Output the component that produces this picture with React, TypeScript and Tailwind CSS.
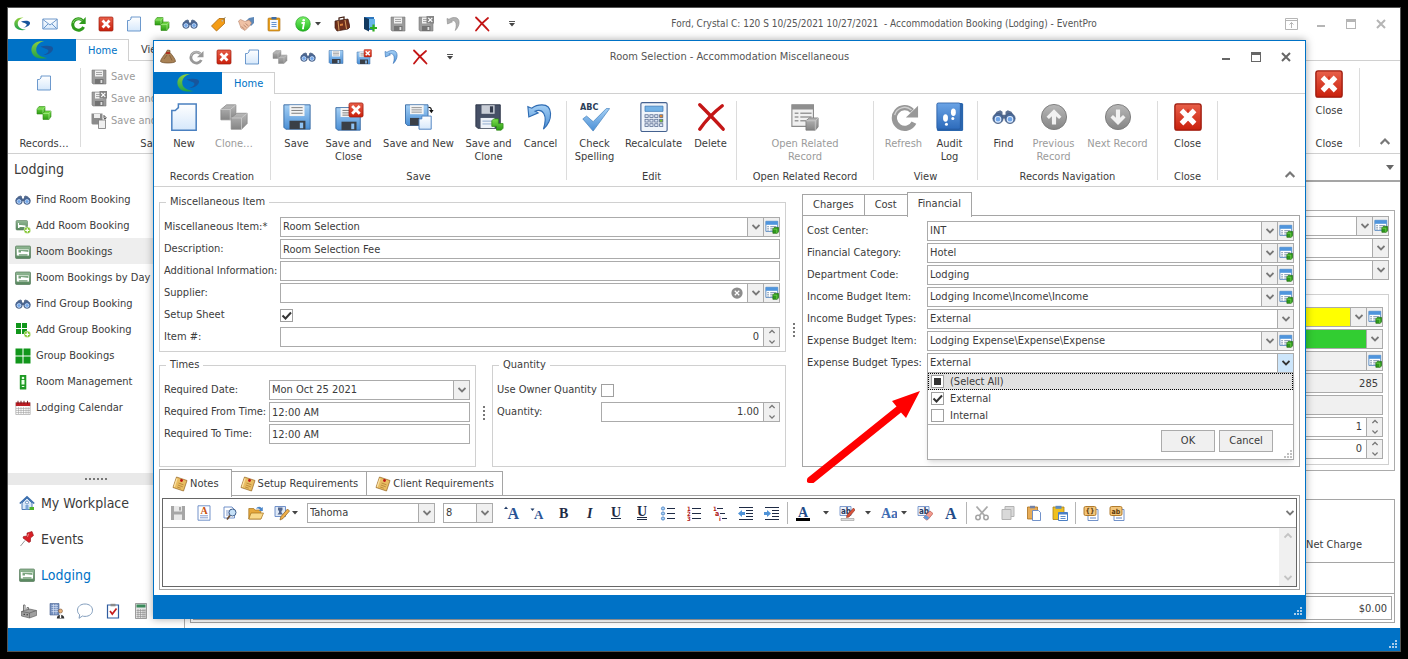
import { ReactNode, useId, useState } from "react";
import clsx from "clsx";

type IconProps = { name: string; size?: string };

const GREEN_CUBES = (
  <>
    <path d="M1 4l2-2.500h6v5l-2 2.500H1z" fill="url(#gGreen)" stroke="#2f8a16" strokeWidth=".6" />
    <path d="M1 4h6l2-2.500M7 4v6" fill="none" stroke="#b5f39a" strokeWidth=".6" />
    <path d="M7 8.500L9 6h6v5.500L13 14.500H7z" fill="url(#gGreen)" stroke="#2f8a16" strokeWidth=".6" />
    <path d="M7 8.500h6L15 6M13 8.500v6" fill="none" stroke="#b5f39a" strokeWidth=".6" />
  </>
);

const GREY_CUBES = (
  <>
    <path d="M1 4l3-2.500h5v5.500l-3 2.500H1z" fill="url(#gGrey)" stroke="#858585" strokeWidth=".4" />
    <path d="M1 4h5l3-2.500M6 4v6" fill="none" stroke="#cfcfcf" strokeWidth=".4" />
    <path d="M6.500 8.500l3-2.500h5.500v5.500l-3 3H6.500z" fill="url(#gGrey)" stroke="#858585" strokeWidth=".4" />
    <path d="M6.500 8.500h5.500l3-2.500M12 8.500v6" fill="none" stroke="#cfcfcf" strokeWidth=".4" />
  </>
);

const BINOCULARS = (
  <>
    <path d="M3 4.500L5.500 3.500l1.500 1v2h2v-2l1.500-1L13 4.500l2.500 4.500h-15z" fill="#5b7092" />
    <circle cx="4" cy="9" r="3.400" fill="#4a6a9a" stroke="#42587c" strokeWidth=".5" />
    <circle cx="12" cy="9" r="3.400" fill="#4a6a9a" stroke="#42587c" strokeWidth=".5" />
    <circle cx="4" cy="9.500" r="1.900" fill="#6fa5e8" stroke="#dcebff" strokeWidth=".7" />
    <circle cx="12" cy="9.500" r="1.900" fill="#6fa5e8" stroke="#dcebff" strokeWidth=".7" />
  </>
);

const PAGE = <path d="M5 1h9.500v14h-13V4.500h1.800L5 3z" fill="url(#gPage)" stroke="#4a80c0" strokeWidth=".8" />;

const BLUE_FLOPPY = (
  <>
    <path d="M1 1.500h14v13H2l-1-1z" fill="url(#gBlue)" stroke="#3d6ea5" strokeWidth=".5" />
    <path d="M4 1.700h8v5.800H4z" fill="#f4f4f4" />
    <path d="M5 3h6M5 4.500h6M5 6h6" stroke="#777" strokeWidth=".5" />
    <path d="M4 10h8.500v4.500H4z" fill="#3a3f47" />
    <path d="M9.500 11h1.800v3H9.500z" fill="#8fc1f2" />
  </>
);

const GREY_FLOPPY = (
  <>
    <path d="M1 1h14v14H2l-1-1z" fill="#9b9b9b" stroke="#7e7e7e" strokeWidth=".6" />
    <path d="M4 1.500h8v6H4z" fill="#efefef" />
    <path d="M5 3.500h6M5 5.500h6" stroke="#8a8a8a" strokeWidth=".7" />
    <path d="M4 10h8.500v5H4z" fill="#737373" />
    <path d="M9.500 11h1.800v3H9.500z" fill="#dedede" />
  </>
);

const RED_CLOSE = (
  <>
    <rect x="1" y="1" width="14" height="14" rx="1.200" fill="url(#gRed)" stroke="#9e1a0c" strokeWidth=".7" />
    <path d="M5.500 5.500l5 5M10.500 5.500l-5 5" stroke="#fff" strokeWidth="2.800" strokeLinecap="square" />
    <path d="M8 4v1.500M8 10.500V12" stroke="#d63520" strokeWidth="1" />
  </>
);

const BED = (
  <>
    <rect x=".5" y="2" width="15" height="12.500" rx="1" fill="url(#gBed)" stroke="#557a5a" strokeWidth=".7" />
    <path d="M3 5.500h10.500v5.500H3z" fill="none" stroke="#e6f2e6" strokeWidth=".7" />
    <path d="M1.800 5v6.500h2V10h8.700v1.500h1.500V8L6 7v1.500H3.300V5z" fill="#fff" />
  </>
);

const PLUS_BADGE = (
  <>
    <circle cx="12.300" cy="12.300" r="3.300" fill="#79c221" stroke="#fff" strokeWidth=".5" />
    <path d="M12.300 10.200v4.200M10.200 12.300h4.200" stroke="#fff" strokeWidth="1.200" />
  </>
);

const CLIPBOARD = (
  <>
    <rect x="2" y="2" width="12" height="13" rx="1" fill="#e6a022" stroke="#a86a0c" strokeWidth=".6" />
    <path d="M4 4h8v9.500H4z" fill="#f3f8ff" />
    <path d="M5.500 1h5v2.500h-5z" fill="#3f6ea8" />
    <path d="M5.500 6.500h5M5.500 8.500h5M5.500 10.500h5" stroke="#3f78c4" strokeWidth=".8" />
  </>
);

const ICONS: Record<string, ReactNode> = {
  logo: (
    <>
      <path d="M9.500 1.500C4 1 0 4 .3 8.300.6 12.800 5.500 15.300 12 13.800 7.500 13.300 4 11.500 3.800 8 3.700 4.800 6 2.500 9.500 1.500z" fill="url(#gLogo)" />
      <path d="M7 5.500c3-.8 8.500-1.300 9 1.200.4 2.300-3 4.800-7 5 2.200-.9 4-2.200 3.600-3.400C12.200 7.200 9.500 7.200 7 5.500z" fill="#17559c" />
    </>
  ),
  mail: (
    <>
      <path d="M.800 3h14.400v10H.800z" fill="url(#gPage)" stroke="#5d8cc4" strokeWidth=".9" />
      <path d="M1 3.500l7 5.500 7-5.500M1.500 12.500L6 8M14.500 12.500L10 8" fill="none" stroke="#5d8cc4" strokeWidth=".9" />
    </>
  ),
  refreshGreen: (
    <>
      <path d="M12.500 4.500A5.700 5.700 0 1 0 13.600 11" fill="none" stroke="#2f9a1c" strokeWidth="3" />
      <path d="M15.700 1v7H9z" fill="#2f9a1c" />
      <path d="M12 4.300A5.500 5.500 0 0 0 3 7" fill="none" stroke="#9be07f" strokeWidth=".9" />
    </>
  ),
  refreshGrey: (
    <>
      <path d="M12.300 4.700A5.500 5.500 0 1 0 13.300 11" fill="none" stroke="#989898" strokeWidth="2.800" />
      <path d="M15.500 2v6.300H9z" fill="#989898" />
      <path d="M12 4.300A5.500 5.500 0 0 0 3 7" fill="none" stroke="#cfcfcf" strokeWidth=".8" />
    </>
  ),
  close: RED_CLOSE,
  page: PAGE,
  cubesGreen: GREEN_CUBES,
  cubesGrey: GREY_CUBES,
  binoculars: BINOCULARS,
  tag: (
    <>
      <path d="M9 2.500h5.500v5L6.500 15 1.500 10z" fill="#f59d16" stroke="#a8650a" strokeWidth=".8" />
      <circle cx="12.300" cy="4.700" r="1" fill="#fff" stroke="#a8650a" strokeWidth=".5" />
      <path d="M12.500 4.500L15.500 1" stroke="#775" strokeWidth=".7" />
    </>
  ),
  handshake: (
    <>
      <path d="M8 5l3-3 5-1v6l-3 3z" fill="#5d88b8" />
      <path d="M.5 5l2-1.500 4.500 2 4-1.500 2.500 3-2 3L7 14.500 3 12z" fill="#efc2a6" stroke="#b5836a" strokeWidth=".6" />
      <path d="M3.500 10.500l3 2.500M5.500 9l3 2.500M7.500 7.500l3 2.500" stroke="#a8745a" strokeWidth=".7" />
    </>
  ),
  clipboard: CLIPBOARD,
  info: (
    <>
      <circle cx="8" cy="8" r="7.300" fill="url(#gInfo)" stroke="#18981a" strokeWidth=".6" />
      <circle cx="8.700" cy="4.200" r="1.300" fill="#fff" />
      <path d="M6.500 7H9l-1 5.300h1" fill="none" stroke="#fff" strokeWidth="1.800" />
    </>
  ),
  suitcase: (
    <>
      <path d="M5 4V2l5-1v3" fill="none" stroke="#3d1a0e" strokeWidth="1.200" />
      <path d="M1 5l13-2 2 8-2 2-11 2-2-3z" fill="#6e2f1b" stroke="#3d1a0e" strokeWidth=".7" />
      <path d="M4 5l1 9.500M11 4l1.500 9" stroke="#d8a063" strokeWidth="1" />
      <path d="M6 8l3-.5v2L6 10z" fill="#d8813f" />
    </>
  ),
  doorAdd: (
    <>
      <path d="M2 1h10v13H6z" fill="#2d76bd" />
      <path d="M2 1l5 2v12.500L2 13z" fill="#12395f" />
      <path d="M7 3h6v9H7z" fill="#69b4ea" />
      <path d="M11.500 8.500v7M8 12h7" stroke="#2fae22" strokeWidth="2.200" />
    </>
  ),
  floppyGrey: GREY_FLOPPY,
  floppyGreyClose: (
    <>
      {GREY_FLOPPY}
      <path d="M8.500 0H16v7.500H8.500z" fill="#858585" />
      <path d="M10.300 1.800l4 4M14.300 1.800l-4 4" stroke="#fff" strokeWidth="1.200" />
    </>
  ),
  floppyGreyNew: (
    <>
      <path d="M.500.5h11v11H1.500l-1-1z" fill="#8b8b8b" />
      <path d="M3 1h6v4H3z" fill="#eee" />
      <path d="M7.500 7h7v8.500h-7z" fill="#f0f0f0" stroke="#777" strokeWidth=".8" />
      <path d="M12 3h2v3M12.500 4.500L14 6.300l1.500-1.800" fill="none" stroke="#444" strokeWidth=".9" />
    </>
  ),
  floppy: BLUE_FLOPPY,
  floppyClose: (
    <>
      <path d="M1 3h13v12H2l-1-1z" fill="url(#gBlue)" stroke="#3d6ea5" strokeWidth=".5" />
      <path d="M3.500 3.200h8v4.800h-8z" fill="#f4f4f4" />
      <path d="M4.500 4.500h6M4.500 5.800h6M4.500 7h6" stroke="#777" strokeWidth=".5" />
      <path d="M4 10.500h8V15H4z" fill="#3a3f47" />
      <path d="M9.200 11.500h1.600v3H9.200z" fill="#8fc1f2" />
      <rect x="8" y=".5" width="7.500" height="7.500" rx=".8" fill="url(#gRed)" stroke="#9e1a0c" strokeWidth=".4" />
      <path d="M10.200 2.700l3 3M13.200 2.700l-3 3" stroke="#fff" strokeWidth="1.500" strokeLinecap="square" />
    </>
  ),
  floppyNew: (
    <>
      <path d="M.800 1.500h12v11H1.800l-1-1z" fill="url(#gBlue)" stroke="#3d6ea5" strokeWidth=".5" />
      <path d="M3.200 1.700h7.300v4.800H3.200z" fill="#f4f4f4" />
      <path d="M4 3h5.500M4 4.200h5.500M4 5.400h5.500" stroke="#777" strokeWidth=".4" />
      <path d="M3.200 8.500h5v4h-5z" fill="#3a3f47" />
      <path d="M9.500 7.500h5v7h-6.500V9h1.500z" fill="url(#gPage)" stroke="#4a80c0" strokeWidth=".5" />
      <path d="M13 2.800c1.200 0 1.600.5 1.600 1.500" fill="none" stroke="#111" strokeWidth=".6" />
      <path d="M13.400 4.200h2.400l-1.200 1.800z" fill="#111" />
    </>
  ),
  floppyClone: (
    <>
      <path d="M1 1.500h13v12.500H2l-1-1z" fill="#465066" stroke="#2b3346" strokeWidth=".5" />
      <path d="M4 1.700h7v4.600H4z" fill="#c8cdd6" />
      <path d="M8.500 2.300h1.700v3.300H8.500z" fill="#333b4d" />
      <path d="M3.500 8.500h7.500v5.400H3.500z" fill="#eef2f8" />
      <path d="M4.500 10.200h5.500M4.500 11.700h5.500" stroke="#8ba7cc" strokeWidth=".5" />
      <path d="M9.500 10l1-1h2.500v2.500h2.500v2.500l-1 1H12v-2H9.500z" fill="url(#gGreen)" stroke="#2f8a16" strokeWidth=".4" />
    </>
  ),
  undo: (
    <path d="M1 2.500l.5 5.500 5-2.200-1.700-.9c4-1.500 7 1.600 4.500 9.600C14.500 9.500 14.500 1.500 8.500 1.500c-2 0-3.800.5-5.500 1.800z" fill="url(#gBlue)" stroke="#2f6cb3" strokeWidth=".6" />
  ),
  undoGrey: (
    <path d="M1 2.500l.5 5.500 5-2.200-1.700-.9c4-1.500 7 1.600 4.500 9.600C14.500 9.500 14.500 1.500 8.500 1.500c-2 0-3.800.5-5.500 1.800z" fill="#b1b1b1" stroke="#8c8c8c" strokeWidth=".6" />
  ),
  cross: (
    <>
      <path d="M2 1.500C5 4.500 10 9.500 14.500 14.500" stroke="#c41616" strokeWidth="1.800" strokeLinecap="round" />
      <path d="M14 2C9.500 5.500 5.500 9.500 2 14.500" stroke="#c41616" strokeWidth="1.800" strokeLinecap="round" />
    </>
  ),
  moneyBag: (
    <>
      <path d="M6 3.500L7.500 1l2.500.5L10 3.500C12 6 15.500 10 15.500 12.500c-2 2-13 2-15 0C.5 10.500 4 6 6 3.500z" fill="#a98255" stroke="#6c4c2a" strokeWidth=".7" />
      <path d="M6 4h4" stroke="#b02a1a" strokeWidth="1.800" />
      <path d="M4 10l3-4M12 11.500L9.500 6" stroke="#7a5833" strokeWidth=".7" />
    </>
  ),
  spelling: (
    <>
      <text x="0" y="4.500" fontSize="4.800" fontWeight="bold" fill="#2c3e58">ABC</text>
      <path d="M1.500 9l2-1.500L7 10.500 14 3.500h1.800L7 15.500z" fill="url(#gBlue)" stroke="#4b86bf" strokeWidth=".4" />
    </>
  ),
  calculator: (
    <>
      <rect x="1" y=".3" width="14" height="15.400" rx=".8" fill="#f0f5fb" stroke="#44618f" strokeWidth=".6" />
      <path d="M3.200 2.200h9.600v2.800H3.200z" fill="#74b2e6" stroke="#3f79b5" strokeWidth=".4" />
      {[6.8, 9.2, 11.6].map((y) =>
        [3.2, 5.8, 8.4, 11].map((x) => (
          <rect
            key={`${x}-${y}`}
            x={x}
            y={y}
            width="1.700"
            height="1.500"
            fill={x === 11 && y === 6.8 ? "#e88a2a" : x === 11 && y === 9.2 ? "#7cc230" : "#dfe8f5"}
            stroke="#52658c"
            strokeWidth=".4"
          />
        ))
      )}
    </>
  ),
  record: (
    <>
      <path d="M1 1.500h11.500v11.500H1z" fill="#f0f0f0" stroke="#8b8b8b" strokeWidth=".6" />
      <path d="M1 1.500h11.500v2.500H1z" fill="#8f8f8f" />
      <path d="M2.500 6h2M5.500 6h6M2.500 8h2M5.500 8h6M2.500 10h2M5.500 10h3" stroke="#999" strokeWidth=".7" />
      <path d="M8.500 10l1.800-1.500H15v4.800L13.500 15h-5z" fill="url(#gGrey)" stroke="#777" strokeWidth=".4" />
      <path d="M8.500 10h5L15 8.500M13.500 10v5" fill="none" stroke="#cfcfcf" strokeWidth=".4" />
    </>
  ),
  audit: (
    <>
      <rect x="1" y=".5" width="14" height="15" rx=".8" fill="#2a66ae" />
      <rect x="1" y=".5" width="12.500" height="14" rx=".8" fill="url(#gAudit)" stroke="#2659a0" strokeWidth=".4" />
      <ellipse cx="9.800" cy="5.500" rx="1.300" ry="2" fill="#fff" />
      <ellipse cx="9.500" cy="8.800" rx=".8" ry=".8" fill="#fff" />
      <ellipse cx="5.600" cy="8.500" rx="1.300" ry="2" fill="#fff" />
      <ellipse cx="6.100" cy="11.800" rx=".8" ry=".8" fill="#fff" />
    </>
  ),
  up: (
    <>
      <circle cx="8" cy="8" r="6.700" fill="url(#gGrey)" stroke="#7c7c7c" strokeWidth=".5" />
      <path d="M8 3.800l4 4-1.300 1.300-1.600-1.500V12H6.900V7.600L5.300 9.100 4 7.800z" fill="#f1f1f1" />
    </>
  ),
  down: (
    <>
      <circle cx="8" cy="8" r="6.700" fill="url(#gGrey)" stroke="#7c7c7c" strokeWidth=".5" />
      <path d="M8 12.200l4-4-1.300-1.300-1.600 1.500V4H6.900v4.400L5.300 6.900 4 8.200z" fill="#f1f1f1" />
    </>
  ),
  bed: BED,
  bedAdd: (
    <>
      <rect x="1" y="2.500" width="11.500" height="9.500" rx="1" fill="url(#gBed)" stroke="#5c8060" strokeWidth=".6" />
      <path d="M3 5v5h1.500V9h5v1h1V7.500L6 7H4V5z" fill="#fff" />
      {PLUS_BADGE}
    </>
  ),
  group: <path d="M.500.500h7v7h-7zM8.500.500h7v7h-7zM.500 8.500h7v7h-7zM8.500 8.500h7v7h-7z" fill="#11961b" />,
  groupAdd: (
    <>
      <path d="M1 1h5v5H1zM7 1h5v5H7zM1 7h5v5H1zM7 7h5v5H7z" fill="#11961b" />
      {PLUS_BADGE}
    </>
  ),
  room: (
    <>
      <rect x="4.800" y="1" width="6.500" height="14.500" rx=".5" fill="#1e9a24" />
      <circle cx="8" cy="4" r="1.300" fill="#e8ffe6" />
      <path d="M6.500 6h3v4.500h-3z" fill="#e8ffe6" />
      <path d="M6.800 12.500h2.500" stroke="#e8ffe6" />
    </>
  ),
  calendar: (
    <>
      <path d="M.800 2.500h14.400v12H.800z" fill="#fafafa" stroke="#999" strokeWidth=".6" />
      <path d="M.800 2.500h14.400v3.500H.800z" fill="#bb1d24" />
      <path d="M3 .8v3M6 .8v3M9 .8v3M12.500.8v3" stroke="#6d0d12" strokeWidth=".9" />
      <path d="M3.500 7v7M6 7v7M8.500 7v7M11 7v7M13.200 7v7M1 8.500h14M1 10.500h14M1 12.500h14" stroke="#999" strokeWidth=".5" />
    </>
  ),
  house: (
    <>
      <path d="M3 8v6.500h10V8L8 3z" fill="#d9e8f8" stroke="#3c6fae" strokeWidth=".9" />
      <path d="M.800 8.500L8 1.800l7.200 6.700" fill="none" stroke="#3c6fae" strokeWidth="1.700" />
      <circle cx="8" cy="7.500" r="1.500" fill="#fff" stroke="#3c6fae" strokeWidth=".7" />
      <path d="M6.500 10h3v4.500h-3z" fill="#7aa6d8" />
      <path d="M10.500 12h4.500v3h-4.500z" fill="#4db22a" />
    </>
  ),
  pin: (
    <>
      <path d="M6 9.500L1.500 15" stroke="#999" strokeWidth="1" />
      <path d="M8 2l5-1.500 1.500 4-3 2.500v3.500l-1.500 1-6-4.500.5-1.500 3.500-.5z" fill="#d81f26" stroke="#8d1015" strokeWidth=".6" />
      <path d="M9.500 2.800l-1 3" stroke="#f7a0a0" strokeWidth=".9" />
    </>
  ),
  factory: (
    <>
      <path d="M2.500 9V2H4v5M6 7V4.500h1.500V7" stroke="#777" strokeWidth="1" fill="none" />
      <path d="M.5 8.500l8-2.500 7 1.500v5l-7 2.500-8-2z" fill="#a0a0a0" stroke="#555" strokeWidth=".6" />
      <path d="M.5 8.500l8 1.500 7-2.500M8.500 10v5" stroke="#555" strokeWidth=".6" fill="none" />
      <path d="M2.500 11.300h1.500M5.500 11.800h1.500" stroke="#333" strokeWidth="1" />
    </>
  ),
  building: (
    <>
      <path d="M1 .5h9V12H1z" fill="#7792c0" stroke="#46608f" strokeWidth=".6" />
      <path d="M2.500 2.500h6.500M2.500 4.500h6.500M2.500 6.500h6.500M2.500 8.500h6.500M4.500 1v10.500M7 1v10.500" stroke="#dbe6f7" strokeWidth=".6" />
      <circle cx="11.500" cy="8" r="2" fill="#e7b27d" stroke="#6a4525" strokeWidth=".5" />
      <path d="M7.800 15.500c0-5 7.500-5 7.500 0z" fill="#333" />
      <path d="M11.500 11.500V15" stroke="#fff" strokeWidth="1.400" />
    </>
  ),
  bubble: (
    <path d="M8 1c4.300 0 7.500 2.500 7.500 6.200s-3.200 6.200-7.500 6.200c-1 0-1.800-.1-2.600-.4L2 15.300l.7-3.500C1.200 10.600.5 9 .5 7.200.5 3.500 3.700 1 8 1z" fill="#fff" stroke="#7593b5" strokeWidth=".9" />
  ),
  checklist: (
    <>
      <path d="M2.500 2h11v13h-11z" fill="#fff" stroke="#2f5c9f" strokeWidth="1.200" />
      <path d="M5.500.8h5v2.500h-5z" fill="#8b8b8b" />
      <path d="M5 8l2.300 3L11.500 5.500" fill="none" stroke="#c51d1d" strokeWidth="1.700" />
    </>
  ),
  calcSmall: (
    <>
      <path d="M2.500.5h11v15h-11z" fill="#e3e3e3" stroke="#777" strokeWidth=".7" />
      <path d="M3.500 1.500h9v3h-9z" fill="#3a8a5b" />
      <path d="M5 6v9M7.500 6v9M10 6v9M12 6v9M3.500 7.500h9M3.500 9.500h9M3.500 11.500h9M3.500 13.500h9" stroke="#8c8c8c" strokeWidth=".6" />
    </>
  ),
  note: (
    <>
      <path d="M4.500 1l10.500 3.500-3.500 10.500L1 11.500z" fill="#e9bd62" stroke="#94621c" strokeWidth=".7" />
      <path d="M5 2.500L2.200 11" stroke="#fbe3a8" strokeWidth="1.200" />
      <path d="M6.500 7l5 1.800M5.800 9l5 1.800M5.200 11l3.500 1.200" stroke="#a8762c" strokeWidth=".7" />
      <circle cx="9.500" cy="4.500" r="1.400" fill="#bf1515" />
    </>
  ),
  lookup: (
    <>
      <path d="M1 1.500h13.500v11.500H1z" fill="#fff" stroke="#4a80bd" strokeWidth="1" />
      <path d="M1 1.500h13.500v4H1z" fill="#4f95dd" />
      <path d="M2.500 7.500h2M6 7.500h7M2.500 9.500h2M6 9.500h3M2.500 11.500h2M6 11.500h3" stroke="#7f93ad" strokeWidth="1" />
      <path d="M9 10l1.500-1.500h5v5L14 15.200H9z" fill="#2f9a1c" stroke="#1f6d10" strokeWidth=".8" />
      <path d="M9.500 10.500h4V15" fill="none" stroke="#7fdc5c" strokeWidth=".8" />
    </>
  ),
  clear: (
    <>
      <circle cx="8" cy="8" r="7.500" fill="#8c8c8c" />
      <path d="M5 5l6 6M11 5l-6 6" stroke="#fff" strokeWidth="1.600" />
    </>
  ),
  saveFlat: (
    <>
      <path d="M1 1h14v14H1z" fill="#a6a6a6" />
      <path d="M4 1h8v5.500H4zM4 9.500h8V15H4z" fill="#e9e9e9" />
      <path d="M9 2h2v3.500H9z" fill="#a6a6a6" />
    </>
  ),
  docA: (
    <>
      <path d="M2 .8h12v14.400H2z" fill="#fff" stroke="#6387c4" strokeWidth=".9" />
      <path d="M4 10.800h8M4 12.800h8" stroke="#7793c8" strokeWidth=".9" />
      <text x="4.500" y="9" fontSize="10" fontWeight="bold" fontFamily="Liberation Serif" fill="#c8500f">A</text>
    </>
  ),
  preview: (
    <>
      <path d="M2 2h8l2.500 2.500V13H2z" fill="#fff" stroke="#6387c4" strokeWidth=".9" />
      <path d="M4 6h3M4 8h3M4 10h3" stroke="#7793c8" strokeWidth=".9" />
      <circle cx="10.500" cy="7.500" r="3.500" fill="#c5e0f7" stroke="#3f5f8c" strokeWidth="1" />
      <path d="M8 10.500L5 14.500" stroke="#6c4a2d" strokeWidth="1.700" />
    </>
  ),
  open: (
    <>
      <path d="M.8 3.500h5l1 1.500h6v9H.8z" fill="#e6a83c" stroke="#a5711a" strokeWidth=".7" />
      <path d="M3 8h12.500l-2.500 6H.8z" fill="#f9d98a" stroke="#a5711a" strokeWidth=".7" />
      <path d="M8 4c1-2.500 4-3 5.500-1l1.300-1v4h-4l1.300-1.300C11 3.500 9.500 3.300 8 4z" fill="#4b86c9" />
    </>
  ),
  saveEdit: (
    <>
      <path d="M1 1.500h10.500v10H1z" fill="#dfe9f6" stroke="#6387c4" strokeWidth=".9" />
      <path d="M4 2.500h4.500v2.500L7.500 6v1.500L9 9.500H3.500L5 7.500V6L4 5z" fill="#52658c" />
      <path d="M13.500 4l2 2-6.500 7.500-3 1.500.8-3.200z" fill="#f0b04c" stroke="#8e5f18" strokeWidth=".7" />
    </>
  ),
  growA: (
    <>
      <text x="3.500" y="14" fontSize="16" fontWeight="bold" fontFamily="Liberation Serif" fill="#2b5494">A</text>
      <path d="M0 4L2 1.500 4 4z" fill="#1f3a66" />
    </>
  ),
  shrinkA: (
    <>
      <text x="4" y="14" fontSize="13" fontWeight="bold" fontFamily="Liberation Serif" fill="#2b5494">A</text>
      <path d="M.5 3.500L2.500 6l2-2.500z" fill="#1f3a66" />
    </>
  ),
  bold: <text x="3" y="13" fontSize="14" fontWeight="bold" fontFamily="Liberation Serif" fill="#1e2b45">B</text>,
  italic: <text x="5" y="13" fontSize="14" fontWeight="bold" fontStyle="italic" fontFamily="Liberation Serif" fill="#1e2b45">I</text>,
  underline: (
    <>
      <text x="3" y="11.500" fontSize="14" fontFamily="Liberation Serif" fontWeight="bold" fill="#1e2b45">U</text>
      <path d="M3 13.500h10" stroke="#1e2b45" />
    </>
  ),
  underline2: (
    <>
      <text x="3" y="10.500" fontSize="14" fontFamily="Liberation Serif" fontWeight="bold" fill="#1e2b45">U</text>
      <path d="M3 12.500h10M3 14.500h10" stroke="#1e2b45" />
    </>
  ),
  bullets: (
    <>
      <path d="M7 3.500h8M7 8.500h8M7 13.500h8" stroke="#1e2b45" />
      {[3.5, 8.5, 13.5].map((y) => (
        <circle key={y} cx="3" cy={y} r="1.600" fill="#a9d0f5" stroke="#3c78bd" strokeWidth=".8" />
      ))}
    </>
  ),
  numbers: (
    <>
      <path d="M6 3.500h9M6 8.500h9M6 13.500h9" stroke="#1e2b45" />
      {[1, 2, 3].map((n) => (
        <text key={n} x="1" y={n * 5 + 0.5} fontSize="6" fontWeight="bold" fill="#b01818">{n}</text>
      ))}
    </>
  ),
  multilevel: (
    <>
      <path d="M5 3.500h6M8 8.500h5M10 13.500h5" stroke="#1e2b45" />
      <text x="1" y="5.500" fontSize="6" fontWeight="bold" fill="#b01818">1</text>
      <text x="3" y="10.500" fontSize="7" fontWeight="bold" fill="#b01818">a</text>
      <text x="7" y="15.500" fontSize="6" fontWeight="bold" fill="#b01818">i</text>
    </>
  ),
  outdent: (
    <>
      <path d="M1 2.500h14M8 5.500h7M8 8.500h7M8 11.500h7M1 14.500h14" stroke="#1e2b45" />
      <path d="M0 8.500L4 5v2h3v3H4v2z" fill="#4f93d8" />
    </>
  ),
  indent: (
    <>
      <path d="M1 2.500h14M8 5.500h7M8 8.500h7M8 11.500h7M1 14.500h14" stroke="#1e2b45" />
      <path d="M7 8.500L3 5v2H0v3h3v2z" fill="#4f93d8" />
    </>
  ),
  fontColor: (
    <>
      <text x="3" y="11.500" fontSize="14" fontWeight="bold" fontFamily="Liberation Serif" fill="#234b88">A</text>
      <path d="M1 13h14v3H1z" fill="#000" />
    </>
  ),
  highlight: (
    <>
      <path d="M1 1.500h11v9H1z" fill="#eef3fb" stroke="#6387c4" strokeWidth=".8" />
      <text x="2" y="8.500" fontSize="8" fontWeight="bold" fill="#26395f">ab</text>
      <path d="M14.500 3l1.500 2-6 7-2.500.5.500-2.500z" fill="#d9533a" stroke="#8c2a18" strokeWidth=".6" />
      <path d="M2 13.500h13v2H2z" fill="#ddd" stroke="#999" strokeWidth=".6" />
    </>
  ),
  caseAa: <text x="0" y="13" fontSize="14" fontWeight="bold" fontFamily="Liberation Serif" fill="#3e6db5">Aa</text>,
  eraser: (
    <>
      <path d="M1 1.500h11v9H1z" fill="#eef3fb" stroke="#6387c4" strokeWidth=".8" />
      <text x="2" y="8.500" fontSize="8" fontWeight="bold" fill="#26395f">ab</text>
      <path d="M13 6l3 2.500-5 6-1.500.500-3-2.500z" fill="#f19a8e" stroke="#b2483a" strokeWidth=".6" />
      <path d="M9 10l3.200 2.700-2.200 2.300-3.500-2.500z" fill="#5e9add" />
    </>
  ),
  plainA: <text x="2" y="14" fontSize="16" fontWeight="bold" fontFamily="Liberation Serif" fill="#234b88">A</text>,
  cut: (
    <>
      <path d="M2.500 1.500l8 9M13.500 1.500l-8 9" stroke="#aaa" strokeWidth="1.800" />
      <circle cx="4" cy="12.500" r="2.200" fill="none" stroke="#a3a3a3" strokeWidth="1.500" />
      <circle cx="12" cy="12.500" r="2.200" fill="none" stroke="#a3a3a3" strokeWidth="1.500" />
    </>
  ),
  copy: (
    <>
      <path d="M5 1.500h9v10H5z" fill="#d9d9d9" stroke="#b3b3b3" />
      <path d="M2 4.500h9v10H2z" fill="#d9d9d9" stroke="#b3b3b3" />
    </>
  ),
  paste: (
    <>
      <path d="M1.500 2h10v12h-10z" fill="#e7ac57" stroke="#a9701d" strokeWidth=".8" />
      <path d="M4 .8h5v2.500H4z" fill="#7382a5" />
      <path d="M6.500 5.500h6l2 2v8h-8z" fill="#fff" stroke="#6387c4" strokeWidth=".9" />
    </>
  ),
  pasteSpecial: (
    <>
      <path d="M1 2h11v12.500H1z" fill="#efc01f" stroke="#a9801d" strokeWidth=".8" />
      <path d="M3.500.8h6v3h-6z" fill="#5d8bc0" />
      <path d="M6.500 7.500h9v8h-9z" fill="#fff" stroke="#4b7fc4" strokeWidth="1" />
      <path d="M6.500 8.500h9" stroke="#4b7fc4" strokeWidth="2" />
      <path d="M8.500 11.500h5M8.500 13.500h5" stroke="#4b7fc4" strokeWidth=".9" />
    </>
  ),
  fieldCodes: (
    <>
      <path d="M5 4.500h10v11H5z" fill="#fff" stroke="#6387c4" strokeWidth=".9" />
      <path d="M7 13h6" stroke="#6387c4" />
      <rect x="1" y="1.500" width="12" height="9" rx="1.500" fill="#f2c57a" stroke="#a9701d" strokeWidth=".9" />
      <text x="2.500" y="8.200" fontSize="7" fontWeight="bold" fill="#5b3a0c">{"{}"}</text>
    </>
  ),
  fieldResult: (
    <>
      <path d="M5 4.500h10v11H5z" fill="#fff" stroke="#6387c4" strokeWidth=".9" />
      <path d="M7 13h6" stroke="#6387c4" />
      <rect x="1" y="1.500" width="12" height="9" rx="1.500" fill="#f2c57a" stroke="#a9701d" strokeWidth=".9" />
      <text x="2.500" y="8.500" fontSize="7" fontWeight="bold" fill="#5b3a0c">ab</text>
    </>
  ),
};

function Icon({ name, size = "size-4" }: IconProps) {
  return (
    <svg viewBox="0 0 16 16" className={clsx("shrink-0", size)} aria-hidden="true">
      {ICONS[name]}
    </svg>
  );
}

function Gradients() {
  const stops: [string, string, string][] = [
    ["gGreen", "#7be04c", "#2b9a14"],
    ["gGrey", "#b8b8b8", "#858585"],
    ["gPage", "#ffffff", "#d6e8fb"],
    ["gBlue", "#a5d0f5", "#4a8fd6"],
    ["gRed", "#e8604a", "#c9200c"],
    ["gBed", "#93b996", "#55855c"],
    ["gInfo", "#7cf06a", "#20b81e"],
    ["gLogo", "#8fd03c", "#1fa04a"],
    ["gAudit", "#6ba4e6", "#2d6bbb"],
  ];
  return (
    <svg className="absolute size-0" aria-hidden="true">
      <defs>
        {stops.map(([id, from, to]) => (
          <linearGradient key={id} id={id} x1="0" y1="0" x2="0" y2="1">
            <stop offset="0" stopColor={from} />
            <stop offset="1" stopColor={to} />
          </linearGradient>
        ))}
      </defs>
    </svg>
  );
}

function Chevron({ up = false, className = "size-2 text-[#777]" }: { up?: boolean; className?: string }) {
  return (
    <svg viewBox="0 0 8 8" className={clsx("shrink-0", className)} aria-hidden="true">
      <path d={up ? "M0.500 5.500L4 2l3.500 3.500" : "M0.500 2L4 5.500 7.500 2"} fill="none" stroke="currentColor" strokeWidth="1.800" />
    </svg>
  );
}

function Triangle() {
  return (
    <svg viewBox="0 0 6 4" className="h-1 w-1.5 shrink-0 text-[#444]" aria-hidden="true">
      <path d="M0 0h6L3 3.500z" fill="currentColor" />
    </svg>
  );
}

function Grip({ className }: { className?: string }) {
  return (
    <svg viewBox="0 0 9 9" className={clsx("size-[9px]", className)} aria-hidden="true">
      <path d="M6 0h2v2H6zM3 3h2v2H3zM6 3h2v2H6zM0 6h2v2H0zM3 6h2v2H3zM6 6h2v2H6z" fill="currentColor" />
    </svg>
  );
}

function QuickBar({ icons }: { icons: string[] }) {
  return (
    <div className="flex items-center">
      {icons.map((icon) => (
        <button
          key={icon}
          type="button"
          aria-label={icon}
          className={clsx("flex h-7 items-center justify-center", icon === "info" ? "w-10 gap-1" : "w-7")}
        >
          <Icon name={icon} />
          {icon === "info" && <Triangle />}
        </button>
      ))}
      <button type="button" aria-label="Customize toolbar" className="flex h-7 w-8 flex-col items-center justify-center gap-px">
        <span className="h-px w-1.5 bg-[#555]" />
        <Triangle />
      </button>
    </div>
  );
}

function WindowControls({ pinned = false, className }: { pinned?: boolean; className: string }) {
  return (
    <div className={clsx("flex pr-1", className)}>
      {pinned && (
        <button type="button" aria-label="Ribbon options" className="flex size-[30px] items-center justify-center">
          <svg viewBox="0 0 13 12" className="h-3 w-[13px]" fill="none" stroke="currentColor">
            <path d="M.5.5h12v11H.5zM.5 2.500h12M6.500 10V4.500M4.500 6.500l2-2 2 2" />
          </svg>
        </button>
      )}
      <button type="button" aria-label="Minimize" className="flex size-[30px] items-center justify-center">
        <span className="mt-1 h-0.5 w-2 bg-current" />
      </button>
      <button type="button" aria-label="Maximize" className="flex size-[30px] items-center justify-center">
        <span className="size-2.5 border border-t-3 border-current" />
      </button>
      <button type="button" aria-label="Close" className="flex size-[30px] items-center justify-center">
        <svg viewBox="0 0 10 10" className="size-2.5" stroke="currentColor" strokeWidth="2">
          <path d="M1 1l8 8M9 1L1 9" />
        </svg>
      </button>
    </div>
  );
}

function RibbonTabs({ tabs }: { tabs: string[] }) {
  return (
    <div className="flex h-[22px] shrink-0">
      <button type="button" aria-label="File" className="flex w-[68px] items-center justify-center bg-[#0072c6]">
        <Icon name="logo" size="size-[22px]" />
      </button>
      {tabs.map((tab, i) => (
        <button
          key={tab}
          type="button"
          className={clsx(
            "border-[#d0d0d0] px-3",
            i === 0 ? "w-[53px] border-t border-r text-[#0072c6]" : "border-b"
          )}
        >
          {tab}
        </button>
      ))}
      <div className="flex-1 border-b border-[#d0d0d0]" />
    </div>
  );
}

type RibbonItem = { icon: string; label: string; width: string; disabled?: boolean };
type Group = { title: string; width: string; items: RibbonItem[] };

const DIALOG_GROUPS: Group[] = [
  {
    title: "Records Creation",
    width: "w-[117px]",
    items: [
      { icon: "page", label: "New", width: "w-11" },
      { icon: "cubesGrey", label: "Clone…", width: "w-14", disabled: true },
    ],
  },
  {
    title: "Save",
    width: "w-[296px]",
    items: [
      { icon: "floppy", label: "Save", width: "w-11" },
      { icon: "floppyClose", label: "Save and Close", width: "w-[60px]" },
      { icon: "floppyNew", label: "Save and New", width: "w-20" },
      { icon: "floppyClone", label: "Save and Clone", width: "w-[60px]" },
      { icon: "undo", label: "Cancel", width: "w-11" },
    ],
  },
  {
    title: "Edit",
    width: "w-[170px]",
    items: [
      { icon: "spelling", label: "Check Spelling", width: "w-12" },
      { icon: "calculator", label: "Recalculate", width: "w-[70px]" },
      { icon: "cross", label: "Delete", width: "w-11" },
    ],
  },
  {
    title: "Open Related Record",
    width: "w-[137px]",
    items: [{ icon: "record", label: "Open Related Record", width: "w-20", disabled: true }],
  },
  {
    title: "View",
    width: "w-[104px]",
    items: [
      { icon: "refreshGrey", label: "Refresh", width: "w-12", disabled: true },
      { icon: "audit", label: "Audit Log", width: "w-11" },
    ],
  },
  {
    title: "Records Navigation",
    width: "w-[180px]",
    items: [
      { icon: "binoculars", label: "Find", width: "w-11" },
      { icon: "up", label: "Previous Record", width: "w-14", disabled: true },
      { icon: "down", label: "Next Record", width: "w-[72px]", disabled: true },
    ],
  },
  { title: "Close", width: "w-[60px]", items: [{ icon: "close", label: "Close", width: "w-12" }] },
];

const SMALL_RIBBON_ICONS = ["binoculars"];

function RibbonButton({ item }: { item: RibbonItem }) {
  return (
    <button
      type="button"
      disabled={item.disabled}
      className={clsx("flex flex-col items-center gap-1 leading-[13px]", item.width, item.disabled && "text-[#9b9b9b]")}
    >
      <span className="flex size-8 items-center justify-center">
        <Icon name={item.icon} size={SMALL_RIBBON_ICONS.includes(item.icon) ? "size-6" : "size-[30px]"} />
      </span>
      <span>{item.label}</span>
    </button>
  );
}

function RibbonGroup({ title, width, children }: { title: string; width: string; children: ReactNode }) {
  return (
    <div className={clsx("flex shrink-0 flex-col border-r border-[#dcdcdc]", width)}>
      <div className="flex min-h-0 flex-1 justify-center">{children}</div>
      <p className="-mb-1 text-center whitespace-nowrap">{title}</p>
    </div>
  );
}

function CollapseRibbon({ className }: { className: string }) {
  return (
    <button type="button" aria-label="Collapse ribbon" className={clsx("mr-2.5 self-end", className)}>
      <Chevron up className="size-2.5 text-[#777]" />
    </button>
  );
}

function ComboButton({ active = false }: { active?: boolean }) {
  return (
    <span
      className={clsx(
        "pointer-events-none flex w-4 shrink-0 items-center justify-center border-l border-[#ababab]",
        active ? "bg-[#cde6fb]" : "bg-[#f0f0f0]"
      )}
    >
      <Chevron className={active ? "size-2 text-[#333]" : "size-2 text-[#777]"} />
    </span>
  );
}

type ComboProps = { id?: string; label?: string; value: string; lookup?: boolean; clearable?: boolean; fill?: string };

function Combo({ id, label, value, lookup = false, clearable = false, fill = "bg-white" }: ComboProps) {
  return (
    <div className="flex h-5 w-full border border-[#ababab]">
      <select id={id} aria-label={label} className={clsx("min-w-0 flex-1 appearance-none px-0.5 outline-none", fill)}>
        <option>{value}</option>
      </select>
      {clearable && (
        <button type="button" aria-label="Clear" className="flex w-5 items-center justify-center bg-white">
          <Icon name="clear" size="size-3" />
        </button>
      )}
      <ComboButton />
      {lookup && <LookupButton />}
    </div>
  );
}

function LookupButton() {
  return (
    <button type="button" aria-label="Open record" className="flex w-4 shrink-0 items-center justify-center border-l border-[#ababab] bg-[#f0f0f0]">
      <Icon name="lookup" size="size-3.5" />
    </button>
  );
}

function TextField({ id, value = "" }: { id: string; value?: string }) {
  return <input id={id} defaultValue={value} className="h-5 w-full border border-[#ababab] bg-white px-0.5 outline-none" />;
}

function SpinField({ id, label, value }: { id?: string; label?: string; value: string }) {
  return (
    <div className="flex h-5 w-full border border-[#ababab]">
      <input id={id} aria-label={label} defaultValue={value} className="min-w-0 flex-1 px-1 text-right outline-none" />
      <span className="flex w-4 shrink-0 flex-col items-center justify-center gap-1 border-l border-[#ababab] bg-[#f0f0f0]">
        <Chevron up className="size-1.5 text-[#777]" />
        <Chevron className="size-1.5 text-[#777]" />
      </span>
    </div>
  );
}

type CheckState = "on" | "off" | "mixed";

function CheckBox({ id, label, initial }: { id?: string; label?: string; initial: CheckState }) {
  const [state, setState] = useState<CheckState>(initial);
  return (
    <span className="relative flex size-[13px] shrink-0">
      <input
        id={id}
        aria-label={label}
        type="checkbox"
        checked={state === "on"}
        ref={(el) => {
          if (el) el.indeterminate = state === "mixed";
        }}
        onChange={(e) => setState(e.target.checked ? "on" : "off")}
        className="size-[13px] appearance-none border border-[#a0a0a0] bg-white"
      />
      <svg viewBox="0 0 13 13" className="pointer-events-none absolute inset-0 size-[13px]" aria-hidden="true">
        {state === "on" && <path d="M2.500 6.500l3 3 5.500-6" fill="none" stroke="#333" strokeWidth="2" />}
        {state === "mixed" && <path d="M3 3h7v7H3z" fill="#333" />}
      </svg>
    </span>
  );
}

function Row({ label, children }: { label: string; children: (id: string) => ReactNode }) {
  const id = useId();
  return (
    <>
      <label htmlFor={id} className="whitespace-nowrap">
        {label}
      </label>
      <div className="flex h-5 min-w-0 items-center">{children(id)}</div>
    </>
  );
}

function FieldGroup({ title, columns, children }: { title: string; columns: string; children: ReactNode }) {
  return (
    <fieldset className="min-w-0 border border-[#d0d0d0] pr-[5px] pl-1">
      <legend className="ml-0.5 px-1 leading-[14px]">{title}</legend>
      <div className={clsx("grid items-center gap-y-0.5 pt-2 pb-1", columns)}>{children}</div>
    </fieldset>
  );
}

function SplitterDots() {
  return (
    <div className="flex flex-col items-center justify-center gap-0.5">
      {[0, 1, 2, 3].map((i) => (
        <span key={i} className="size-0.5 bg-[#777]" />
      ))}
    </div>
  );
}

const FINANCIAL_FIELDS = [
  { label: "Cost Center:", value: "INT", lookup: true },
  { label: "Financial Category:", value: "Hotel", lookup: true },
  { label: "Department Code:", value: "Lodging", lookup: true },
  { label: "Income Budget Item:", value: "Lodging Income\\Income\\Income", lookup: true },
  { label: "Income Budget Types:", value: "External", lookup: false },
  { label: "Expense Budget Item:", value: "Lodging Expense\\Expense\\Expense", lookup: true },
];

const BUDGET_TYPES: { label: string; state: CheckState }[] = [
  { label: "(Select All)", state: "mixed" },
  { label: "External", state: "on" },
  { label: "Internal", state: "off" },
];

function BudgetTypesField({ id }: { id: string }) {
  const [open, setOpen] = useState(true);
  return (
    <div className="relative w-full">
      <button
        id={id}
        type="button"
        aria-expanded={open}
        onClick={() => setOpen(!open)}
        className="flex h-5 w-full items-center border border-[#ababab] bg-white text-left"
      >
        <span className="flex-1 px-0.5">External</span>
        <span className="flex h-full">
          <ComboButton active={open} />
        </span>
      </button>
      {open && (
        <div className="absolute inset-x-0 top-5 z-10 border border-t-0 border-[#ababab] bg-white shadow-md">
          {BUDGET_TYPES.map((type, i) => (
            <label
              key={type.label}
              className={clsx(
                "flex h-[17px] items-center gap-1.5 border border-dotted px-0.5",
                i === 0 ? "border-black bg-[#e1e1e1]" : "border-transparent"
              )}
            >
              <CheckBox initial={type.state} />
              {type.label}
            </label>
          ))}
          <div className="relative flex justify-end gap-1 border-t border-[#ababab] pt-[5px] pr-5 pb-[7px]">
            <button type="button" onClick={() => setOpen(false)} className="h-[22px] w-[54px] border border-[#ababab] bg-[#f0f0f0]">
              OK
            </button>
            <button type="button" onClick={() => setOpen(false)} className="h-[22px] w-[54px] border border-[#ababab] bg-[#f0f0f0]">
              Cancel
            </button>
            <Grip className="absolute right-0 bottom-0 text-[#c0c0c0]" />
          </div>
        </div>
      )}
    </div>
  );
}

function FinancialPanel() {
  return (
    <div className="flex min-w-0 flex-col">
      <div className="flex h-6 items-end">
        {["Charges", "Cost", "Financial"].map((tab) => (
          <button
            key={tab}
            type="button"
            className={clsx(
              "border border-[#a5a5a5] px-2.5",
              tab === "Financial" ? "relative -mb-px -ml-px h-[25px] border-b-0 bg-white pb-0.5" : "h-[22px] not-first:-ml-px"
            )}
          >
            {tab}
          </button>
        ))}
      </div>
      <div className="-mt-px flex-1 border border-[#a5a5a5] pt-[5px] pr-[5px] pl-1">
        <div className="grid grid-cols-[120px_minmax(0,1fr)] items-center gap-y-0.5">
          {FINANCIAL_FIELDS.map((field) => (
            <Row key={field.label} label={field.label}>
              {(id) => <Combo id={id} value={field.value} lookup={field.lookup} />}
            </Row>
          ))}
          <Row label="Expense Budget Types:">{(id) => <BudgetTypesField id={id} />}</Row>
        </div>
      </div>
    </div>
  );
}

function ItemPanel() {
  return (
    <div className="flex min-w-0 flex-col gap-1.5 pt-[3px]">
      <FieldGroup title="Miscellaneous Item" columns="grid-cols-[116px_minmax(0,1fr)]">
        <Row label="Miscellaneous Item:*">{(id) => <Combo id={id} value="Room Selection" lookup />}</Row>
        <Row label="Description:">{(id) => <TextField id={id} value="Room Selection Fee" />}</Row>
        <Row label="Additional Information:">{(id) => <TextField id={id} />}</Row>
        <Row label="Supplier:">{(id) => <Combo id={id} value="" lookup clearable />}</Row>
        <Row label="Setup Sheet">{(id) => <CheckBox id={id} initial="on" />}</Row>
        <Row label="Item #:">{(id) => <SpinField id={id} value="0" />}</Row>
      </FieldGroup>
      <div className="grid flex-1 grid-cols-[317fr_16px_294fr]">
        <FieldGroup title="Times" columns="grid-cols-[105px_minmax(0,1fr)]">
          <Row label="Required Date:">{(id) => <Combo id={id} value="Mon Oct 25 2021" />}</Row>
          <Row label="Required From Time:">{(id) => <TextField id={id} value="12:00 AM" />}</Row>
          <Row label="Required To Time:">{(id) => <TextField id={id} value="12:00 AM" />}</Row>
        </FieldGroup>
        <SplitterDots />
        <FieldGroup title="Quantity" columns="grid-cols-[104px_minmax(0,1fr)]">
          <Row label="Use Owner Quantity">{(id) => <CheckBox id={id} initial="off" />}</Row>
          <Row label="Quantity:">{(id) => <SpinField id={id} value="1.00" />}</Row>
        </FieldGroup>
      </div>
    </div>
  );
}

function ToolButtons({ icons }: { icons: string[] }) {
  return (
    <>
      {icons.map((icon) => (
        <button key={icon} type="button" aria-label={icon} className="flex h-6 w-[26px] items-center justify-center">
          <Icon name={icon} />
        </button>
      ))}
    </>
  );
}

function ArrowTool({ icon, width }: { icon: string; width: string }) {
  return (
    <button type="button" aria-label={icon} className={clsx("flex h-6 items-center justify-between px-[5px]", width)}>
      <Icon name={icon} />
      <Triangle />
    </button>
  );
}

function ToolDivider() {
  return <span className="mx-0.5 h-[22px] w-px bg-[#b5b5b5]" />;
}

function NotesEditor() {
  return (
    <div className="flex min-h-0 flex-1 flex-col">
      <div className="flex h-[27px] shrink-0 items-end">
        {["Notes", "Setup Requirements", "Client Requirements"].map((tab, i) => (
          <button
            key={tab}
            type="button"
            className={clsx(
              "flex items-center gap-0.5 border border-[#a5a5a5]",
              i === 0 ? "relative -mb-px h-7 border-b-0 bg-white px-3" : "-ml-px h-[25px] px-2"
            )}
          >
            <Icon name="note" />
            {tab}
          </button>
        ))}
      </div>
      <div className="-mt-px flex min-h-0 flex-1 flex-col border border-[#a5a5a5] p-0.5">
        <div className="flex min-h-0 flex-1 flex-col border border-[#666]">
          <div className="flex h-[29px] shrink-0 items-center border-b border-[#a5a5a5] pl-0.5">
            <ToolButtons icons={["saveFlat", "docA", "preview", "open"]} />
            <ArrowTool icon="saveEdit" width="w-[34px]" />
            <div className="ml-1 w-32">
              <Combo label="Font" value="Tahoma" />
            </div>
            <div className="mr-1.5 ml-2 w-[50px]">
              <Combo label="Font size" value="8" />
            </div>
            <ToolButtons
              icons={["growA", "shrinkA", "bold", "italic", "underline", "underline2", "bullets", "numbers", "multilevel", "outdent", "indent"]}
            />
            <ToolDivider />
            <ArrowTool icon="fontColor" width="w-11" />
            <ArrowTool icon="highlight" width="w-[42px]" />
            <ArrowTool icon="caseAa" width="w-9" />
            <ToolButtons icons={["eraser", "plainA"]} />
            <ToolDivider />
            <ToolButtons icons={["cut", "copy", "paste", "pasteSpecial"]} />
            <ToolDivider />
            <ToolButtons icons={["fieldCodes", "fieldResult"]} />
            <button type="button" aria-label="More tools" className="mr-0.5 ml-auto">
              <Chevron />
            </button>
          </div>
          <div className="flex min-h-0 flex-1">
            <textarea aria-label="Notes" className="min-w-0 flex-1 resize-none outline-none" />
            <div className="flex w-[17px] flex-col items-center justify-between bg-[#f0f0f0] py-1">
              <Chevron up className="size-2 text-[#c3c3c3]" />
              <Chevron className="size-2 text-[#c3c3c3]" />
            </div>
          </div>
        </div>
      </div>
    </div>
  );
}

function StatusBar() {
  return (
    <footer className="relative h-[23px] shrink-0 bg-[#0072c6]">
      <Grip className="absolute right-0.5 bottom-0.5 text-[#a9cdea]" />
    </footer>
  );
}

function RoomSelectionDialog() {
  return (
    <section
      role="dialog"
      aria-label="Room Selection"
      className="absolute top-10 right-[102px] bottom-10 left-[153px] flex flex-col border border-[#0072c6] bg-white shadow-[0_0_8px_rgba(0,0,0,0.35)]"
    >
      <header className="grid h-[31px] shrink-0 grid-cols-[1fr_auto_1fr] items-center">
        <QuickBar icons={["moneyBag", "refreshGrey", "close", "page", "cubesGrey", "binoculars", "floppy", "floppyClose", "undo", "cross"]} />
        <h1 className="text-[#555]">Room Selection - Accommodation Miscellaneous</h1>
        <WindowControls className="justify-end text-[#666]" />
      </header>
      <RibbonTabs tabs={["Home"]} />
      <div className="flex h-[93px] shrink-0 border-b border-[#d0d0d0] pt-[7px] pb-1.5">
        {DIALOG_GROUPS.map((group) => (
          <RibbonGroup key={group.title} title={group.title} width={group.width}>
            {group.items.map((item) => (
              <RibbonButton key={item.label} item={item} />
            ))}
          </RibbonGroup>
        ))}
        <CollapseRibbon className="ml-auto" />
      </div>
      <div className="flex min-h-0 flex-1 flex-col gap-0.5 px-[5px] py-[5px]">
        <div className="grid h-[275px] shrink-0 grid-cols-[627fr_16px_498fr]">
          <ItemPanel />
          <SplitterDots />
          <FinancialPanel />
        </div>
        <NotesEditor />
      </div>
      <StatusBar />
    </section>
  );
}

const NAV_ITEMS = [
  { icon: "binoculars", label: "Find Room Booking" },
  { icon: "bedAdd", label: "Add Room Booking" },
  { icon: "bed", label: "Room Bookings", selected: true },
  { icon: "bed", label: "Room Bookings by Day" },
  { icon: "binoculars", label: "Find Group Booking" },
  { icon: "groupAdd", label: "Add Group Booking" },
  { icon: "group", label: "Group Bookings" },
  { icon: "room", label: "Room Management" },
  { icon: "calendar", label: "Lodging Calendar" },
];

const AREAS = [
  { icon: "house", label: "My Workplace" },
  { icon: "pin", label: "Events" },
  { icon: "bed", label: "Lodging", selected: true },
];

function Sidebar() {
  return (
    <nav className="flex w-[177px] shrink-0 flex-col border-r border-[#ababab]">
      <h2 className="h-8 px-1.5 text-sm leading-[30px]">Lodging</h2>
      {NAV_ITEMS.map((item) => (
        <a
          key={item.label}
          href="#"
          className={clsx("ml-px flex h-[26px] items-center gap-[5px] pt-px pl-1.5 whitespace-nowrap", item.selected && "bg-[#eeeeee]")}
        >
          <Icon name={item.icon} />
          {item.label}
        </a>
      ))}
      <div className="mt-auto flex h-3 items-center justify-center gap-0.5 bg-[#e9e9e9]">
        {[0, 1, 2, 3, 4, 5].map((i) => (
          <span key={i} className="size-0.5 bg-[#777]" />
        ))}
      </div>
      {AREAS.map((area) => (
        <a
          key={area.label}
          href="#"
          className={clsx("flex h-9 items-center gap-1.5 pl-[11px] text-sm", area.selected && "text-[#0072c6]")}
        >
          <Icon name={area.icon} />
          {area.label}
        </a>
      ))}
      <div className="flex h-[35px] items-center gap-3 pl-[13px]">
        {["factory", "building", "bubble", "checklist", "calcSmall"].map((icon) => (
          <button key={icon} type="button" aria-label={icon}>
            <Icon name={icon} />
          </button>
        ))}
      </div>
    </nav>
  );
}

function BookingForm() {
  return (
    <main className="flex min-w-0 flex-1 flex-col pr-[5px] pb-[5px] pl-[5px]">
      <div className="-mx-[5px] flex h-7 shrink-0 items-center justify-end border-b-2 border-[#a5a5a5] pr-1.5">
        <svg viewBox="0 0 8 5" className="h-[5px] w-2 text-[#666]" aria-hidden="true">
          <path d="M0 0h8L4 5z" fill="currentColor" />
        </svg>
      </div>
      <div className="mt-7 flex flex-col gap-0.5 border border-[#ababab] p-[5px]">
        <Combo label="Contact" value="" lookup />
        <Combo label="Location" value="" />
        <Combo label="Room type" value="" />
        <div className="mt-3 flex flex-col gap-0.5 border border-[#d0d0d0] px-[5px] pt-3 pb-[5px]">
          <Combo label="Status" value="" lookup fill="bg-[#ffff00]" />
          <Combo label="Availability" value="" fill="bg-[#32cd32]" />
          <div className="flex h-5 border border-[#ababab] bg-[#f0f0f0]">
            <input aria-label="Room" readOnly className="min-w-0 flex-1" />
            <LookupButton />
          </div>
          <input aria-label="Capacity" readOnly value="285" className="h-5 border border-[#ababab] bg-[#f0f0f0] px-1 text-right" />
          <input aria-label="Remarks" readOnly className="h-5 border border-[#ababab] bg-[#f0f0f0]" />
          <SpinField label="Adults" value="1" />
          <SpinField label="Children" value="0" />
        </div>
      </div>
      <div className="mt-7 flex flex-1 flex-col border border-[#a5a5a5]">
        <div className="flex flex-1 items-end justify-end border-b border-[#a5a5a5] pr-8 pb-2.5">Net Charge</div>
        <div className="h-[31px] border-b border-[#a5a5a5]" />
        <div className="p-0.5">
          <input aria-label="Total" readOnly value="$0.00" className="h-6 w-full border border-[#a5a5a5] px-1 text-right" />
        </div>
      </div>
    </main>
  );
}

function BookingRibbon() {
  return (
    <div className="flex h-[93px] shrink-0 border-b border-[#d0d0d0] pt-[7px] pb-1.5">
      <RibbonGroup title="Records…" width="w-[73px]">
        <div className="flex flex-col items-center gap-3.5 pt-[7px]">
          <button type="button" aria-label="New">
            <Icon name="page" />
          </button>
          <button type="button" aria-label="Clone">
            <Icon name="cubesGreen" />
          </button>
        </div>
      </RibbonGroup>
      <RibbonGroup title="Save" width="w-36">
        <div className="-mt-0.5 flex w-full flex-col pl-2.5 text-[#9b9b9b]">
          {[
            ["floppyGrey", "Save"],
            ["floppyGreyClose", "Save and Close"],
            ["floppyGreyNew", "Save and New"],
          ].map(([icon, label]) => (
            <button key={label} type="button" disabled className="flex h-[22px] shrink-0 items-center gap-1">
              <Icon name={icon} />
              {label}
            </button>
          ))}
        </div>
      </RibbonGroup>
      <div className="flex-1" />
      <RibbonGroup title="Close" width="w-[61px]">
        <RibbonButton item={{ icon: "close", label: "Close", width: "w-12" }} />
      </RibbonGroup>
      <CollapseRibbon className="ml-5" />
    </div>
  );
}

export default function App() {
  return (
    <div className="relative flex h-screen flex-col overflow-hidden bg-black p-[7px] font-['DejaVu_Sans_Condensed',sans-serif] text-[11px] leading-[14px] text-[#3b3b3b]">
      <Gradients />
      <div className="flex min-h-0 flex-1 flex-col border border-[#555] bg-white">
        <header className="flex h-[31px] shrink-0 items-center">
          <QuickBar
            icons={[
              "logo", "mail", "refreshGreen", "close", "page", "cubesGreen", "binoculars", "tag", "handshake", "clipboard",
              "info", "suitcase", "doorAdd", "floppyGrey", "floppyGreyClose", "undoGrey", "cross",
            ]}
          />
          <h1 className="flex-1 truncate pr-9 text-center text-[10px] text-[#555]">
            Ford, Crystal C: 120 S 10/25/2021 10/27/2021 &nbsp;- Accommodation Booking (Lodging) - EventPro
          </h1>
          <WindowControls pinned className="text-[#b5b5b5]" />
        </header>
        <RibbonTabs tabs={["Home", "View"]} />
        <BookingRibbon />
        <div className="flex min-h-0 flex-1">
          <Sidebar />
          <BookingForm />
        </div>
        <StatusBar />
      </div>
      <RoomSelectionDialog />
      <svg viewBox="0 0 120 100" className="pointer-events-none absolute top-[386px] right-[484px] z-20 h-[100px] w-[120px]" aria-hidden="true">
        <path d="M116 5L88 15l4.500 5.500L3.500 92q-2 5 2 5h4L97 26.500l5 5.500z" fill="#f00" />
      </svg>
    </div>
  );
}
